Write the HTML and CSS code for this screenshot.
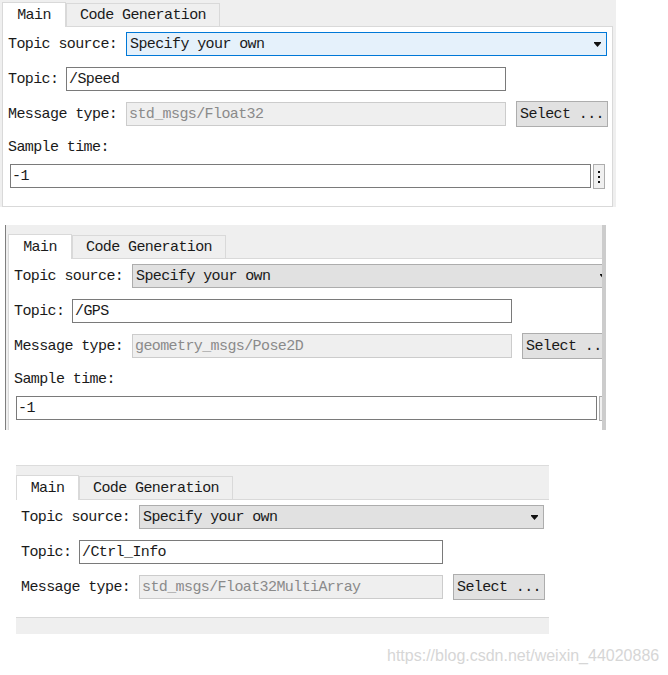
FILE: index.html
```html
<!DOCTYPE html>
<html>
<head>
<meta charset="utf-8">
<link rel="stylesheet" href="styles.css">
</head>
<body>
<div class="page">

  <div class="win w1">
    <div class="tabbar">
      <div class="tab active">Main</div>
      <div class="tab">Code Generation</div>
    </div>
    <div class="pbody">
      <div class="row r1">
        <span class="lbl lw118">Topic source:</span>
        <div class="combo focus cw1"><span>Specify your own</span><svg class="arrow" width="7" height="5" viewBox="0 0 7 5"><path d="M0 0H7V1L3.5 5L0 1Z" fill="#111"/></svg></div>
      </div>
      <div class="row r2">
        <span class="lbl lw58">Topic:</span>
        <div class="field tw1">/Speed</div>
      </div>
      <div class="row r3">
        <span class="lbl lw118">Message type:</span>
        <div class="field disabled mw1">std_msgs/Float32</div>
        <div class="btn">Select ...</div>
      </div>
      <div class="row r4"><span class="lbl">Sample time:</span></div>
      <div class="row r5">
        <div class="field sample">-1</div>
        <div class="dots"><span></span><span></span><span></span></div>
      </div>
    </div>
  </div>

  <div class="frame2">
    <div class="win w1 w2">
      <div class="tabbar">
        <div class="tab active">Main</div>
        <div class="tab">Code Generation</div>
      </div>
      <div class="pbody">
        <div class="row r1">
          <span class="lbl lw118">Topic source:</span>
          <div class="combo cw1"><span>Specify your own</span><svg class="arrow" width="7" height="5" viewBox="0 0 7 5"><path d="M0 0H7V1L3.5 5L0 1Z" fill="#111"/></svg></div>
        </div>
        <div class="row r2">
          <span class="lbl lw58">Topic:</span>
          <div class="field tw1">/GPS</div>
        </div>
        <div class="row r3">
          <span class="lbl lw118">Message type:</span>
          <div class="field disabled mw1">geometry_msgs/Pose2D</div>
          <div class="btn">Select ...</div>
        </div>
        <div class="row r4"><span class="lbl">Sample time:</span></div>
        <div class="row r5">
          <div class="field sample">-1</div>
          <div class="dots"><span></span><span></span><span></span></div>
        </div>
      </div>
    </div>
  </div>

  <div class="win w3">
    <div class="tabbar">
      <div class="tab active">Main</div>
      <div class="tab">Code Generation</div>
    </div>
    <div class="pbody">
      <div class="row r1">
        <span class="lbl lw118">Topic source:</span>
        <div class="combo cw3"><span>Specify your own</span><svg class="arrow" width="7" height="5" viewBox="0 0 7 5"><path d="M0 0H7V1L3.5 5L0 1Z" fill="#111"/></svg></div>
      </div>
      <div class="row r2">
        <span class="lbl lw58">Topic:</span>
        <div class="field tw3">/Ctrl_Info</div>
      </div>
      <div class="row r3">
        <span class="lbl lw118">Message type:</span>
        <div class="field disabled mw3">std_msgs/Float32MultiArray</div>
        <div class="btn">Select ...</div>
      </div>
    </div>
    <div class="statusbar"></div>
  </div>

  <div class="wm">https://blog.csdn.net/weixin_44020886</div>
</div>
</body>
</html>
```
FILE: styles.css
```css
html, body {
  margin: 0;
  padding: 0;
  background: #fff;
}
body {
  width: 668px;
  height: 675px;
  overflow: hidden;
  font-family: "Liberation Mono", "DejaVu Sans Mono", monospace;
  font-size: 15px;
  letter-spacing: -0.6px;
  color: #1a1a1a;
}
.page {
  display: flex;
  flex-direction: column;
  align-items: flex-start;
}
.win {
  background: #efefef;
  flex: none;
}
.w1 {
  width: 616px;
}
.tabbar {
  display: flex;
  align-items: flex-end;
  height: 26px;
  padding-left: 2px;
  box-sizing: border-box;
}
.w2 .tabbar {
  height: 33px;
}
.w3 {
  width: 533px;
  margin: 35px 0 0 16px;
}
.w3 .tabbar {
  height: 34px;
  padding-left: 0;
  border-top: 1px solid #dcdcdc;
}
.tab {
  box-sizing: border-box;
  height: 23px;
  width: 154px;
  border: 1px solid #d9d9d9;
  border-bottom: 0;
  display: flex;
  align-items: center;
  justify-content: center;
  white-space: nowrap;
}
.tab.active {
  height: 25px;
  width: 64px;
  background: #fff;
  margin-bottom: -1px;
  position: relative;
  z-index: 1;
}
.w3 .tab.active {
  width: 63px;
}
.pbody {
  background: #fff;
  border: 1px solid #d9d9d9;
  margin: 0 3px 0 2px;
  padding: 0 0 17px 5px;
}
.w3 .pbody {
  margin: 0;
  border-width: 1px 0 0 0;
}
.statusbar {
  height: 16px;
  border-top: 1px solid #d9d9d9;
  background: #efefef;
}
.row {
  display: flex;
  align-items: center;
  white-space: nowrap;
}
.r1 { margin-top: 5px; height: 24px; }
.r2 { margin-top: 11px; height: 24px; }
.r3 { margin-top: 10px; height: 26px; }
.r4 { margin-top: 11px; height: 18px; }
.r5 { margin-top: 8px; height: 25px; align-items: flex-start; }

.lbl { flex: none; }
.lw118 { width: 118px; }
.lw58 { width: 58px; }

.combo {
  box-sizing: border-box;
  height: 24px;
  border: 1px solid #adadad;
  background: #e1e1e1;
  display: flex;
  align-items: center;
  justify-content: space-between;
  padding: 0 5px 0 3px;
  flex: none;
}
.combo.focus {
  border-color: #0078d7;
  background: #e5f1fb;
}
.arrow { display: block; }
.cw1 { width: 481px; }
.cw3 { width: 405px; }

.field {
  box-sizing: border-box;
  height: 24px;
  border: 1px solid #7a7a7a;
  background: #fff;
  padding: 0 2px;
  display: flex;
  align-items: center;
  overflow: hidden;
  flex: none;
}
.field.disabled {
  border-color: #cccccc;
  background: #efefef;
  color: #8a8a8a;
}
.tw1 { width: 440px; }
.mw1 { width: 380px; }
.tw3 { width: 364px; }
.mw3 { width: 304px; }
.sample {
  width: 581px;
  margin-left: 2px;
  padding-left: 1px;
}
.btn {
  box-sizing: border-box;
  height: 26px;
  width: 92px;
  margin-left: 10px;
  border: 1px solid #adadad;
  background: #e1e1e1;
  display: flex;
  align-items: center;
  padding-left: 3px;
  flex: none;
}
.dots {
  box-sizing: border-box;
  width: 12px;
  height: 25px;
  margin-left: 2px;
  border: 1px solid #adadad;
  background: #f0f0f0;
  display: flex;
  flex-direction: column;
  align-items: center;
  justify-content: center;
  gap: 3px;
  flex: none;
}
.dots span {
  width: 2px;
  height: 2px;
  background: #111;
}
.frame2 {
  box-sizing: border-box;
  width: 601px;
  height: 205px;
  margin: 18px 0 0 5px;
  border-left: 1px solid #7f7f7f;
  border-right: 4px solid #cccccc;
  overflow: hidden;
  flex: none;
}
.wm {
  margin: 13px 0 0 387px;
  font-family: "Liberation Sans", Arial, sans-serif;
  font-size: 16px;
  letter-spacing: 0;
  line-height: 18px;
  color: #d6d6d6;
  white-space: nowrap;
}
```
